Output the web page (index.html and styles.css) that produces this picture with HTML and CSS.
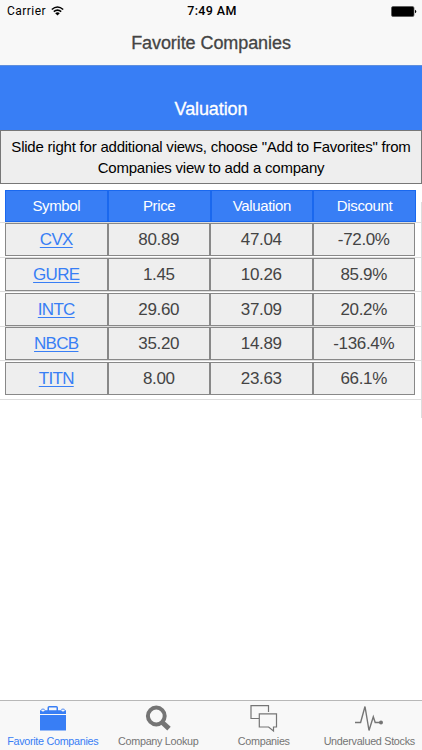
FILE: index.html
```html
<!DOCTYPE html>
<html lang="en">
<head>
<meta charset="utf-8">
<title>Favorite Companies</title>
<link rel="stylesheet" href="styles.css">
</head>
<body>
<header class="top">
  <div class="status">
    <div class="carrier"><span>Carrier</span>
      <svg width="13" height="10" viewBox="0 0 13 10"><g fill="none" stroke="#000" stroke-width="1.6"><path d="M.8 3.5Q6.5-1.5 12.2 3.5M2.8 5.7Q6.5 2.5 10.2 5.7"/></g><path d="M4.2 7.2Q6.5 5.3 8.8 7.2L6.5 9.6Z"/></svg>
    </div>
    <div class="time">7:49 AM</div>
    <svg class="battery" width="26" height="11" viewBox="0 0 26 11"><rect x=".5" y=".5" width="22.5" height="10" rx="1.5" stroke="#555" stroke-width=".7"/><path d="M24 3.8q1.3.4 1.3 1.7T24 7.2Z"/></svg>
  </div>
  <h1>Favorite Companies</h1>
</header>
<main>
  <h2>Valuation</h2>
  <p class="note">Slide right for additional views, choose "Add to Favorites" from<br>Companies view to add a company</p>
  <div class="list">
    <div class="row head"><div>Symbol</div><div>Price</div><div>Valuation</div><div>Discount</div></div>
    <div class="item"><div class="row"><div><a>CVX</a></div><div>80.89</div><div>47.04</div><div>-72.0%</div></div></div>
    <div class="item"><div class="row"><div><a>GURE</a></div><div>1.45</div><div>10.26</div><div>85.9%</div></div></div>
    <div class="item"><div class="row"><div><a>INTC</a></div><div>29.60</div><div>37.09</div><div>20.2%</div></div></div>
    <div class="item"><div class="row"><div><a>NBCB</a></div><div>35.20</div><div>14.89</div><div>-136.4%</div></div></div>
    <div class="item last"><div class="row"><div><a>TITN</a></div><div>8.00</div><div>23.63</div><div>66.1%</div></div></div>
    <i class="scroll"></i>
  </div>
</main>
<nav>
  <div class="tab active">
    <svg width="28" height="28" viewBox="0 0 28 28"><path d="M1 10H27V25.500H1ZM1 5.300H2.300A1.800 1.800 0 0 0 5.700 5.300H8.500V2.700Q8.500 1 10.200 1H17.300Q19 1 19 2.700V5.300H22.300A1.800 1.800 0 0 0 25.700 5.300H27V9H1ZM10 5.300H17.500V2.400H10Z" fill="#387ef5" fill-rule="evenodd"/><path d="M2.800 5V4.100H5.200V5M22.800 5V4.100H25.200V5" fill="none" stroke="#387ef5" stroke-width=".8"/></svg>
    <span>Favorite Companies</span>
  </div>
  <div class="tab">
    <svg width="28" height="28" viewBox="0 0 28 28"><circle cx="12.300" cy="11" r="8.400" fill="none" stroke="#757575" stroke-width="4"/><path d="M17.800 17L25 23.700" fill="none" stroke="#757575" stroke-width="5"/></svg>
    <span>Company Lookup</span>
  </div>
  <div class="tab">
    <svg width="28" height="28" viewBox="0 0 28 28"><path d="M9 13.500H1V.6H18.500V7M9.300 8.900H26.500V22H23.500V26L18.600 22H9.300Z" fill="none" stroke="#757575" stroke-width="1.200"/></svg>
    <span>Companies</span>
  </div>
  <div class="tab">
    <svg width="28" height="28" viewBox="0 0 28 28"><path d="M0 17.500H5.600L10 1.500L14 25.500L18.300 11.800L20.200 17.500H26" fill="none" stroke="#757575" stroke-width="1.400"/><circle cx="26" cy="17.500" r="2"/></svg>
    <span>Undervalued Stocks</span>
  </div>
</nav>
</body>
</html>
```
FILE: styles.css
```css
* { box-sizing: border-box; }
body {
  margin: 0;
  height: 750px;
  display: flex;
  flex-direction: column;
  background: #fff;
  overflow: hidden;
  font-family: "Liberation Sans", Arial, sans-serif;
  color: #444;
}
svg { display: block; }
.top { height: 65px; background: #f8f8f8; }
.status {
  height: 22px;
  display: grid;
  grid-template-columns: 1fr auto 1fr;
  align-items: center;
  padding: 0 5px 0 7px;
  color: #000;
}
.carrier { display: flex; align-items: center; gap: 5px; font: 12px/22px Roboto, sans-serif; letter-spacing: .45px; }
.time { font: 500 12.5px/22px Roboto, sans-serif; letter-spacing: .4px; }
.battery { justify-self: end; }
h1 {
  margin: 0;
  font-size: 18px;
  line-height: 43px;
  font-weight: 400;
  text-align: center;
  letter-spacing: -.08px;
  -webkit-text-stroke: .3px #444;
}
main { flex: 1; }
h2 {
  margin: 0;
  height: 65px;
  padding-top: 23px;
  border-top: 1px solid #5f8fdd;
  background: #387ef5;
  color: #fff;
  font-size: 18px;
  line-height: 41px;
  font-weight: 400;
  text-align: center;
  letter-spacing: -.1px;
  -webkit-text-stroke: .3px #fff;
}
.note {
  margin: 0;
  height: 54px;
  padding-top: 6px;
  border: 1px solid #777;
  background: #eee;
  color: #000;
  font-size: 15px;
  line-height: 20.5px;
  text-align: center;
  white-space: nowrap;
  letter-spacing: -.22px;
}
.list { position: relative; padding-top: 6px; }
.row { display: grid; grid-template-columns: repeat(4, 1fr); text-align: center; }
.head { width: 411px; margin-left: 5px; height: 32px; font-size: 15px; line-height: 30px; letter-spacing: -.35px; color: #fff; }
.head > div { background: #387ef5; border: 1px solid #1a68ee; }
.item { height: 34.6px; padding: .4px 7px 0 5px; border-top: 1px solid #ddd; }
.item .row { height: 32.5px; font-size: 17px; line-height: 31px; letter-spacing: -.35px; }
.item .row > div { background: #eee; border: 1px solid #888; }
.last { height: 40px; border-bottom: 1px solid #ddd; }
a { color: #387ef5; letter-spacing: -.7px; text-decoration: underline; text-decoration-thickness: 1px; text-underline-offset: 2px; }
.scroll { position: absolute; right: 0; top: 18px; width: 1px; height: 216px; background: #ddd; }
nav {
  height: 50px;
  display: grid;
  grid-template-columns: repeat(4, 1fr);
  border-top: 1px solid #b8b8b8;
  background: #f8f8f8;
  color: #757575;
}
.tab { display: flex; flex-direction: column; align-items: center; padding-top: 4px; }
.tab span { font-size: 10.8px; line-height: 16px; letter-spacing: -.3px; white-space: nowrap; }
.tab circle:last-child { fill: #757575; }
.active { color: #387ef5; }
```
